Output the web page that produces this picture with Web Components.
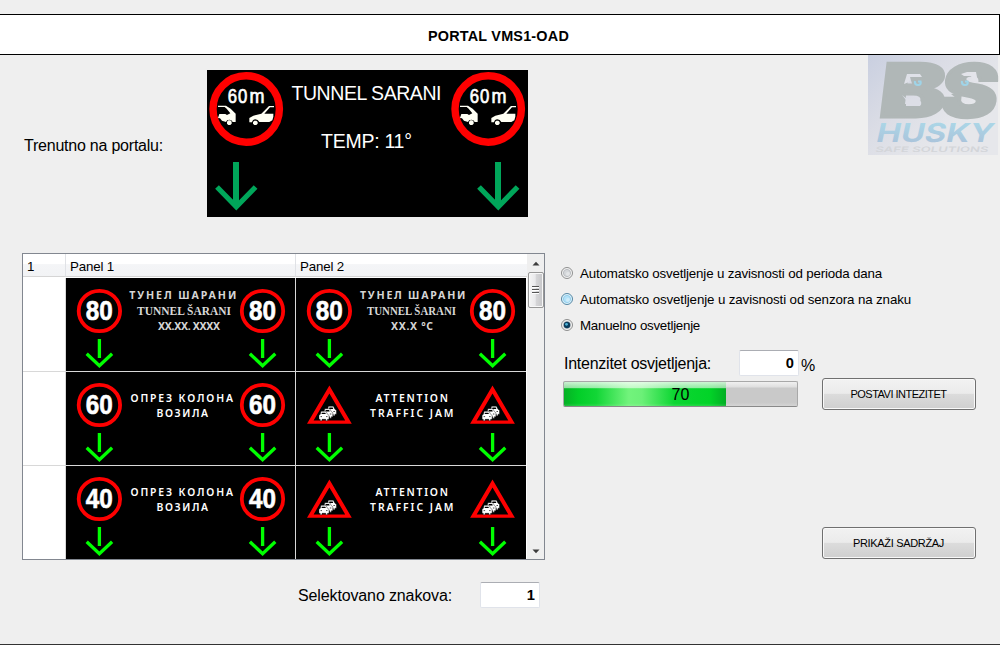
<!DOCTYPE html>
<html lang="sr">
<head>
<meta charset="utf-8">
<title>PORTAL VMS1-OAD</title>
<style>
html,body{margin:0;height:645px;overflow:hidden;background:#efefef}
body{font-family:"Liberation Sans",Arial,sans-serif;color:#000}
</style>
</head>
<body>
<portal-app></portal-app>
<script>
const define = (name, html, setup) => customElements.define(name, class extends HTMLElement {
  constructor() { super(); this.attachShadow({ mode: 'open' }); }
  connectedCallback() {
    if (this.ready) return;
    this.ready = true;
    this.shadowRoot.innerHTML = typeof html === 'function' ? html(this) : html;
    if (setup) setup(this);
  }
});

/* Sign text line stretched to a fixed length */
const line = (t, x, y, w, size, extra = '') =>
  `<text x="${x}" y="${y}" textLength="${w}" font-size="${size}" ${extra}>${t}</text>`;

define('portal-app', `
<style>
:host{display:flex;flex-direction:column;box-sizing:border-box;width:1000px;height:645px;padding-top:14px;border-bottom:1px solid #333}
.top{display:flex;height:198px;align-items:flex-start}
.top .lbl{margin:82px 0 0 24px;width:183px;font-size:16px;line-height:18px}
.top live-sign{margin-top:15px}
.top husky-logo{margin-left:auto;margin-right:2px}
.mid{display:flex;padding-left:22px;height:307px}
.side{margin-left:16px;width:415px;display:flex;flex-direction:column}
.radios{display:flex;flex-direction:column;gap:10px;padding-top:12px}
.int{display:flex;align-items:flex-start;margin-top:17px;height:26px;padding-left:3px}
.int .a{font-size:16px;line-height:18px;width:175px;padding-top:5px}
.int .p{font-size:16px;line-height:18px;margin:7px 0 0 2px}
.bar{display:flex;justify-content:space-between;padding-left:2px;margin-top:2px;align-items:flex-start}
.bar progress-bar{margin-top:3px}
.last{margin:117px 0 0 auto}
.foot{display:flex;margin:22px 0 0 298px;font-size:16px;line-height:18px}
.foot .s{width:182px;padding-top:5px}
</style>
<title-bar><fit-text w="141">PORTAL VMS1-OAD</fit-text></title-bar>
<div class="top">
  <div class="lbl"><fit-text w="139">Trenutno na portalu:</fit-text></div>
  <live-sign></live-sign>
  <husky-logo></husky-logo>
</div>
<div class="mid">
  <panel-table></panel-table>
  <div class="side">
    <div class="radios">
      <radio-item><fit-text w="302">Automatsko osvetljenje u zavisnosti od perioda dana</fit-text></radio-item>
      <radio-item state="hot"><fit-text w="331">Automatsko osvetljenje u zavisnosti od senzora na znaku</fit-text></radio-item>
      <radio-item state="on"><fit-text w="120">Manuelno osvetljenje</fit-text></radio-item>
    </div>
    <div class="int"><div class="a"><fit-text w="147">Intenzitet osvjetljenja:</fit-text></div><num-field>0</num-field><div class="p"><fit-text w="13">%</fit-text></div></div>
    <div class="bar"><progress-bar value="70"></progress-bar><push-button><fit-text w="96">POSTAVI INTEZITET</fit-text></push-button></div>
    <push-button class="last"><fit-text w="91">PRIKAŽI SADRŽAJ</fit-text></push-button>
  </div>
</div>
<div class="foot"><div class="s"><fit-text w="154">Selektovano znakova:</fit-text></div><num-field>1</num-field></div>
`);

define('title-bar', `
<style>:host{display:flex;flex:none;box-sizing:border-box;height:41px;background:#fff;border:1px solid #000;border-left:0;align-items:center;justify-content:center;font-weight:bold;font-size:14.4px;line-height:17px;padding:3px 2px 0 0}</style><slot></slot>`);

define('radio-item', `
<style>
:host{display:flex;height:16px;align-items:center;font-size:13.33px;line-height:16px;gap:7px}
svg{flex:none;width:12px;height:14px}
.t{padding-top:1px}
</style>
<svg viewBox="0 0 12 14"></svg><div class="t"><slot></slot></div>`, el => {
  const s = el.getAttribute('state');
  const [rim, ring, core, edge] = s === 'hot' ? ['#5586a3', '#dff4fd', '#b4e2f8', '#8fcbea'] : ['#8e8f8f', '#f4f4f4', '#d4d7da', '#b4b8bc'];
  el.shadowRoot.querySelector('svg').innerHTML =
    `<circle cx="6" cy="7" r="5.5" fill="${ring}" stroke="${rim}"/><circle cx="6" cy="7" r="3.6" fill="${core}" stroke="${edge}" stroke-width=".9"/>` +
    (s === 'on' ? '<circle cx="6" cy="7" r="3.2" fill="#0b3c5c"/><circle cx="5.5" cy="6.3" r="1.4" fill="#4fb5d8"/>' : '<circle cx="7" cy="8" r="2" fill="#fff" opacity=".35"/>');
});

define('num-field', `
<style>:host{display:block;box-sizing:border-box;width:60px;height:26px;background:#fff;border:1px solid #e0e3ea;border-top-color:#abadb3;border-radius:2px;text-align:right;font-weight:bold;font-size:14.67px;line-height:24px;padding-right:4px}</style><slot></slot>`);

define('push-button', `
<style>:host{display:flex;flex:none;box-sizing:border-box;width:154px;height:32px;border:1px solid #707070;border-radius:3px;box-shadow:inset 0 0 0 1px #f9f9f9;background:linear-gradient(#f2f2f2,#ebebeb 48%,#dcdcdc 50%,#cfcfcf);align-items:center;justify-content:center;font-size:11px;line-height:13px;padding-right:1px}</style><slot></slot>`);

define('progress-bar', el => `
<style>
:host{display:grid;box-sizing:border-box;width:235px;height:26px;border:1px solid #a8a8a8;border-bottom-color:#898989;border-radius:2px;background:linear-gradient(#f0f0f0,#dedede 22%,#c9c9c9 24%,#c9c9c9 85%,#d4d4d4);overflow:hidden}
.f,.t{grid-area:1/1}
.f{width:calc(${el.getAttribute('value')}% - 1px);background:linear-gradient(rgba(255,255,255,.8),rgba(255,255,255,.58) 22%,transparent 27%,transparent 85%,rgba(255,255,255,.18)),linear-gradient(90deg,#06b025,#02ce28 9%,#12d636 20%,#72f37c 40%,#6cf078 48%,#0cd632 68%,#02d328 90%,#02ae24)}
.t{font-size:16px;line-height:24px;text-align:center;padding-top:1px}
</style><div class="f"></div><div class="t">${el.getAttribute('value')}</div>`);

/* Large sign showing the current content of the portal */
define('live-sign', () => {
  const ring = dx => `<g transform="translate(${dx} 0)">
    <circle cx="39.2" cy="39" r="33.2" fill="#000" stroke="#f00" stroke-width="7.4"/>
    <g fill="#fff" stroke="#fff" stroke-width=".7"><text x="20.8" y="32.8" font-size="20.5" textLength="9.3" lengthAdjust="spacingAndGlyphs">6</text><text x="31" y="32.8" font-size="20.5" textLength="9.3" lengthAdjust="spacingAndGlyphs">0</text><text x="42.600" y="32.8" font-size="20.5" textLength="15" lengthAdjust="spacingAndGlyphs">m</text></g>
    <g transform="scale(.33333) translate(-21 -30)" fill="#fffff4">
      <path d="M54 137H78L92 146 107 161V186H98Q95 179 88 179 80 179 78 186L66 182 60 175 54 174 58 162H76L81 165 91 160 80 146 74 141H54Z"/>
      <path d="M81 185L85 181H91L95 185V191L91 195H85L81 191Z"/>
      <path d="M222 138V142H210L193 161 220 161V170L217 181 208 186H178Q174 178 166 178 158 178 156 187H148V174L160 167 184 161 190 155 207 138Z"/>
      <path d="M159 186L163 182H169L173 186V191L169 195H163L159 191Z"/>
    </g></g>`;
  const arrow = dx => `<g transform="translate(${dx} 0)" fill="none" stroke="#00a65a"><path d="M29 92V136" stroke-width="6"/><path d="M10 117 29.3 136.8 48.6 117" stroke-width="5.2"/></g>`;
  return `<style>:host{display:block;width:321px;height:147px;background:#000}svg{display:block}</style>
  <svg width="321" height="147" viewBox="0 0 321 147" fill="#fff" font-family="Liberation Sans,Arial,sans-serif">
  ${ring(0)}${ring(242)}${arrow(0)}${arrow(262)}
  ${line('TUNNEL SARANI', 84.5, 30, 150, 19.5)}${line('TEMP: 11°', 114, 78, 91, 19.5)}</svg>`;
});

/* Small sign preview: speed limit or traffic jam on both sides */
define('sign-preview', el => {
  const kind = el.getAttribute('kind'), limit = el.getAttribute('limit');
  const circle = x => `<ellipse cx="${x}" cy="33" rx="20.7" ry="20.2" fill="none" stroke="#f00" stroke-width="3.8"/>
    <text x="${x - 13.6}" y="42.3" font-size="27" font-weight="bold" stroke="#fff" stroke-width=".6" textLength="27" lengthAdjust="spacingAndGlyphs">${limit}</text>`;
  const car = (x, y) => `<g transform="translate(${x} ${y})"><path d="M2 0H7L8.5 3 10 4V8H8.5V9.5H6.8V8H3V9.5H1.2V8H0V4L1.3 3Z" stroke="#000" stroke-width=".4"/><path d="M3 1.4H6.3L6.8 2.8H2.4Z" fill="#000"/><path d="M1.5 5.300H3M7 5.300H8.5" stroke="#000" stroke-width=".7"/></g>`;
  const tri = x => `<path fill="#f00" fill-rule="evenodd" d="M${x} 13.5L${x + 22.4} 51.8H${x - 22.4}ZM${x} 21.5L${x - 15.8} 48.4H${x + 15.8}Z"/>${car(x - 3, 34.2)}${car(x - 6.6, 36.7)}${car(x - 10.4, 39.3)}`;
  const arrow = x => `<path d="M${x} 61V80M${x - 12.7} 75.7L${x} 87.8 ${x + 12.7} 75.7" fill="none" stroke="#0f0" stroke-width="3.3"/>`;
  const g = 'fill="#d5d5d5" font-weight="600"', s = 'font-family="Liberation Serif,serif" font-weight="bold" fill="#d8d8d8" lengthAdjust="spacingAndGlyphs"', w = 'font-weight="600"';
  const texts = {
    date: line('ТУНЕЛ ШАРАНИ', 63.3, 21.3, 107, 10.6, g.replace('600', '700')) + line('TUNNEL ŠARANI', 71, 37, 94, 11.5, s) + line('XX.XX. XXXX', 92, 52, 62, 10.5, g.replace('600', '700')),
    temp: line('ТУНЕЛ ШАРАНИ', 64, 21.3, 105.5, 10.6, g.replace('600', '700')) + line('TUNNEL ŠARANI', 71, 36.5, 89, 11.5, s) + line('XX.X °C', 95, 52, 42, 10.5, g.replace('600', '700')),
    column: line('ОПРЕЗ КОЛОНА', 64.5, 30, 102.5, 10.4, w) + line('ВОЗИЛА', 90.5, 45, 51.5, 10.4, w),
    jam: line('ATTENTION', 79.5, 29.8, 72.5, 10.4, w) + line('TRAFFIC JAM', 74, 45, 83.5, 10.4, w)
  }[kind];
  const side = limit ? circle : tri;
  return `<style>:host{display:block;height:93px;background:#000}svg{display:block}</style>
  <svg width="229" height="93" viewBox="0 0 229 93" fill="#fff" font-family="Liberation Sans,Arial,sans-serif">
  ${side(33.4)}${side(196.5)}${arrow(33.4)}${arrow(196.6)}<g font-family="Noto Sans,sans-serif">${texts}</g></svg>`;
});

define('panel-table', `
<style>
:host{display:flex;flex:none;box-sizing:border-box;width:523px;height:307px;border:1px solid #828790;background:#fff}
.g{display:grid;grid-template-columns:43px 230px 230px;grid-template-rows:24px 94px 94px 93px;width:504px;align-items:stretch}
.h{box-sizing:border-box;height:23px;border-bottom:1px solid #d5d5d5;border-right:1px solid #e0e2e6;background:linear-gradient(#fff 45%,#f4f5f7 48%,#f2f3f5);font-size:13.33px;line-height:16px;padding:5px 0 0 4px}
.h.l{border-right:0;width:231px}
.c{box-sizing:border-box;border-right:1px solid #d8d8d8;border-bottom:1px solid #d8d8d8;overflow:hidden}
.c.l{border-right:0}.c.b{border-bottom:0}
</style>
<div class="g">
<div class="h">1</div><div class="h"><fit-text w="44">Panel 1</fit-text></div><div class="h l"><fit-text w="44">Panel 2</fit-text></div>
<div class="c"></div><div class="c"><sign-preview kind="date" limit="80"></sign-preview></div><div class="c l"><sign-preview kind="temp" limit="80"></sign-preview></div>
<div class="c"></div><div class="c"><sign-preview kind="column" limit="60"></sign-preview></div><div class="c l"><sign-preview kind="jam"></sign-preview></div>
<div class="c b"></div><div class="c b"><sign-preview kind="column" limit="40"></sign-preview></div><div class="c l b"><sign-preview kind="jam"></sign-preview></div>
</div>
<scroll-bar></scroll-bar>`);

define('scroll-bar', `
<style>
:host{display:flex;flex-direction:column;width:17px;background:#efefef;align-items:flex-end}
.t{box-sizing:border-box;width:16px;height:36px;border:1px solid #979797;border-radius:2px;background:linear-gradient(90deg,#f5f5f5,#e9e9eb 45%,#d6d6d8 50%,#c5c5c8);box-shadow:inset 0 0 0 1px #f8f8f8}
svg{display:block}.d{margin-top:auto}
</style>
<svg width="17" height="18"><path d="M5.5 11.5 9 7.8 12.5 11.5Z" fill="#3c3c3c"/></svg>
<div class="t"><svg width="14" height="34"><path d="M3 13.5H10M3 16.5H10M3 19.5H10" stroke="#555"/><path d="M3 14.5H10M3 17.5H10M3 20.5H10" stroke="#fff"/></svg></div>
<svg class="d" width="17" height="17"><path d="M5.5 7.5 9 11.2 12.5 7.5Z" fill="#3c3c3c"/></svg>`);

define('husky-logo', `
<style>:host{display:block;width:130px;height:100px}svg{display:block;overflow:visible}</style>
<svg width="130" height="100" viewBox="0 0 130 100">
<defs>
<linearGradient id="bg" x1="0" y1="0" x2=".75" y2=".6"><stop offset="0" stop-color="#c9cfe0"/><stop offset=".5" stop-color="#dadce5"/><stop offset="1" stop-color="#e6e7eb"/></linearGradient>
<linearGradient id="hu" x1="0" y1="0" x2="0" y2="1"><stop offset="0" stop-color="#abdbea"/><stop offset="1" stop-color="#aabfd8"/></linearGradient>
</defs>
<rect width="130" height="100" fill="url(#bg)"/>
<g font-family="Inter,sans-serif" font-weight="900">
<g transform="translate(10 63.5) skewX(-7)" fill="#b0b7b7" stroke="#b0b7b7" stroke-width="3"><text x="-1" y="-1.5" font-size="74" textLength="66" lengthAdjust="spacingAndGlyphs">B</text><text x="60" y="-1.5" font-size="73" textLength="57" lengthAdjust="spacingAndGlyphs">S</text></g>
<g transform="translate(8 87) skewX(-12)" fill="url(#hu)"><text x="-1" y="0" font-size="26" font-weight="700" textLength="117" lengthAdjust="spacingAndGlyphs">HUSKY</text></g>
<g transform="translate(7 96.5) skewX(-12)" fill="#d3d5d9"><text x="0" y="0" font-size="7.5" font-weight="600" textLength="113" lengthAdjust="spacingAndGlyphs">SAFE SOLUTIONS</text></g>
</g>
<path d="M36 29 39 19H52L54 22H43L41 27Z" fill="#dfe1e8"/><path d="M93 19 99 17H108L110 27 105 26 103 21H96Z" fill="#e3e4ea"/>
<path d="M42 22H55V32H45Z" fill="#b0b7b7"/>
<path d="M34 40 38 45V51H52Q55 48 51 44H39Z" fill="#dcdee6"/>
<path d="M83 39 93 47 94 37Z" fill="#b0b7b7"/>
<path d="M47 26Q46.5 30 50 30 53.5 30 52.5 26.5L50 26.5" fill="none" stroke="#9fd4e8" stroke-width="2.2"/>
<path d="M94 26Q93.500 30 97 30 100.500 30 99.500 26.500L97 26.500" fill="none" stroke="#9fd4e8" stroke-width="2.2"/>
</svg>`);

/* Text whose tracking is adjusted so that it takes exactly w pixels; defined last, when its surroundings have their styles */
define('fit-text', `<style>:host{display:inline-block;white-space:nowrap}</style><slot></slot>`, el => {
  const n = el.textContent.length, w = el.getBoundingClientRect().width;
  el.style.letterSpacing = ((+el.getAttribute('w') - w) / n) + 'px';
});
</script>
</body>
</html>
